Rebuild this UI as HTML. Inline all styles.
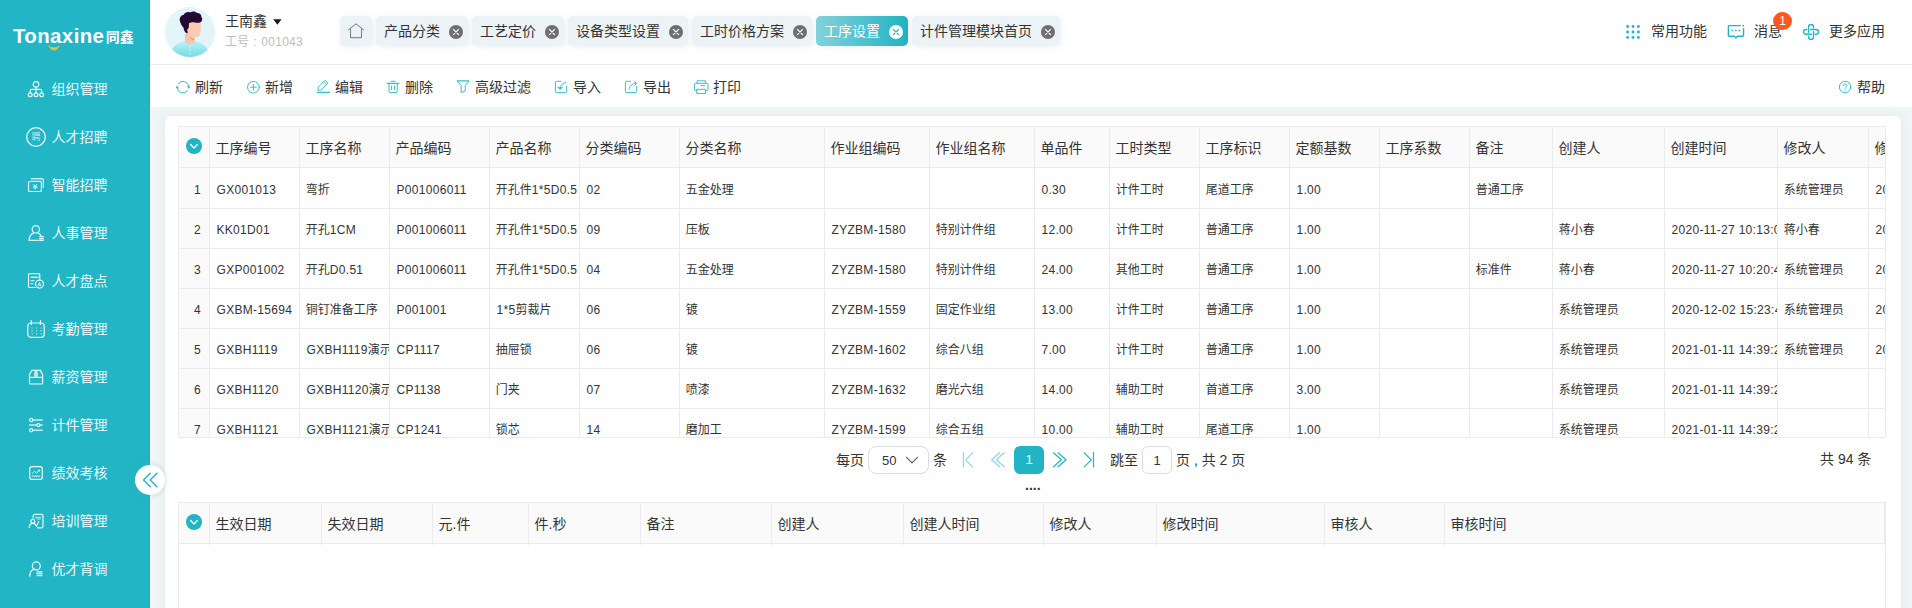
<!DOCTYPE html>
<html lang="zh-CN">
<head>
<meta charset="utf-8">
<title>工序设置</title>
<style>
*{box-sizing:border-box;margin:0;padding:0}
html,body{width:1912px;height:608px;overflow:hidden;background:#eef6f8;font-family:"Liberation Sans","Noto Sans CJK SC",sans-serif;color:#333;font-size:14px}
.abs{position:absolute}
#side{position:absolute;left:0;top:0;width:150px;height:608px;background:#21b5c5;border-right:1px solid #16b2c2;box-shadow:1px 0 0 #fbfdfd}
#logo{position:absolute;left:13px;top:23px;height:26px;line-height:26px;color:#fff;white-space:nowrap}
#logo .en{font-size:20.4px;font-weight:bold;letter-spacing:0.42px}
#logo .cn{font-size:14px;font-weight:bold;letter-spacing:-0.2px;margin-left:1.5px;position:relative;top:-1px}
#smile{position:absolute;left:48px;top:44.5px}
.mi{position:absolute;left:0;width:150px;height:48px;color:#fff;font-size:14px;line-height:20px}
.mi svg{position:absolute;left:27px;top:15px;width:18px;height:18px;fill:none;stroke:#fff;stroke-width:1.2;stroke-linecap:round;stroke-linejoin:round;opacity:.92}
.mi span{position:absolute;left:51.5px;top:14px;white-space:nowrap;font-weight:350}
#head{position:absolute;left:150px;top:0;width:1762px;height:65px;background:#fff;border-bottom:1px solid #e6e9eb}
#tool{position:absolute;left:150px;top:65px;width:1762px;height:42px;background:#fff}
#avatar{position:absolute;left:15px;top:7px;width:50px;height:50px;border-radius:50%;overflow:hidden;background:#e2f5f8}
#uname{position:absolute;left:75px;top:11px;font-size:14px;line-height:20px;color:#333;white-space:nowrap}
#uno{position:absolute;left:75px;top:34px;font-size:12px;line-height:16px;color:#bdbdbd;white-space:nowrap}
.tab{position:absolute;top:16px;height:30px;border-radius:5px;background:#ebf3f6;font-size:14px;line-height:30px;padding-left:8px;white-space:nowrap;color:#333;box-shadow:1px 1px 6px rgba(170,180,185,.2)}
.tab .x{position:absolute;right:5px;top:9px;width:14px;height:14px}
.tab.on{background:linear-gradient(90deg,#82d2da 0%,#20b3c3 100%);color:#fff}
.hr{position:absolute;top:21px;font-size:14px;line-height:20px;white-space:nowrap;color:#333}
.tb{position:absolute;top:12px;font-size:14px;line-height:20px;white-space:nowrap;color:#333}
.tb svg{position:absolute;left:-19px;top:3px;width:14px;height:14px;fill:none;stroke:#3bbccb;stroke-width:1;stroke-linecap:round;stroke-linejoin:round}
#card{position:absolute;left:165px;top:116px;width:1736px;height:520px;background:#fff;border-radius:6px 6px 0 0;box-shadow:0 0 10px rgba(238,224,218,.7)}
.tbl{position:absolute;left:178px;width:1708px;overflow:hidden;border:1px solid #ebebeb;background:#fff}
#t1{top:126px;height:312px}
#t2{top:502px;height:120px}
#t2 .td{position:relative;overflow:visible}
#t2 .td::after{content:'';position:absolute;right:-1px;top:41px;width:1px;height:1px;background:#ebebeb}
.tr{display:flex;width:1900px;height:40px}
.tr.th{height:41px}
.tr.r1{height:41px}
.tr.r1 .td{height:41px;padding-top:1px}
.td{flex:none;height:40px;border-right:1px solid #ebebeb;border-bottom:1px solid #ebebeb;padding:0 0 0 6.5px;font-size:12px;line-height:43px;white-space:nowrap;overflow:hidden;color:#333}
.th .td{height:41px;font-size:14px;line-height:42px;background:#fafafa;color:#333;padding-left:5.5px}
.td.k{padding-left:5.8px}
.td i{font-style:normal;letter-spacing:.3px}
.td.c0{background:#fafafa;padding:0;text-align:center;text-indent:7px}
.th .td.c0{text-indent:0}
.chk{display:block;position:relative;left:7px;top:11px;width:16px;height:16px}
.chk svg{display:block}
#pager{position:absolute;left:0;top:446px;height:28px;font-size:14px;line-height:28px;color:#333;white-space:nowrap}
#pager > *{position:absolute;top:0}
.box{border:1px solid #dcdcdc;border-radius:5px;background:#fff;height:28px}
</style>
</head>
<body>
<div id="side">
  <div id="logo"><span class="en">Tonaxine</span><span class="cn">同鑫</span></div>
  <svg id="smile" width="12" height="6" viewBox="0 0 12 6"><path d="M0.5 0.9 Q6 4.6 11.500 0.9 Q6 9.6 0.5 0.9z" fill="#f2c12c" stroke="#f2c12c" stroke-width=".5" stroke-linejoin="round"/></svg>

  <div class="mi" style="top:65px"><svg viewBox="0 0 18 18"><circle cx="9" cy="4.400" r="2.800"/><path d="M9 7.200v5.500M3.200 12.700v-1.900a1.500 1.500 0 0 1 1.500-1.500h8.500a1.500 1.500 0 0 1 1.500 1.500v1.900"/><circle cx="3.200" cy="14.700" r="1.900"/><circle cx="9" cy="14.700" r="1.900"/><circle cx="14.700" cy="14.700" r="1.900"/></svg><span>组织管理</span></div>
  <div class="mi" style="top:113px"><svg viewBox="0 0 20 20" style="left:26px;top:14px;width:20px;height:20px"><circle cx="10" cy="10" r="9.300" stroke-width="1.300"/><text x="10" y="13.300" font-size="9" text-anchor="middle" fill="#fff" stroke="none" opacity=".8" font-family="'Liberation Sans','Noto Sans CJK SC',sans-serif">聘</text></svg><span>人才招聘</span></div>
  <div class="mi" style="top:161px"><svg viewBox="0 0 18 18"><rect x="1.500" y="5.500" width="12.900" height="10" rx="1.300"/><path d="M4.200 2.600H15.200a1.100 1.100 0 0 1 1.100 1.100V11.500" opacity=".85"/><path d="M4.200 4H15" opacity=".45"/><path d="M6.600 8.300l1.600 1.800 1.600-1.800M6.400 10.300h3.600M6.400 11.800h3.600M8.200 10.100v3.200" stroke-width=".9" opacity=".9"/></svg><span>智能招聘</span></div>
  <div class="mi" style="top:209px"><svg viewBox="0 0 18 18"><circle cx="8.800" cy="5.300" r="3.700"/><path d="M2.200 16.400c0-3.900 1.900-6.500 4.400-7.300M11.100 9.100c1.200.5 2.100 1.200 2.800 2.200M2.200 16.400H11"/><path d="M12.100 12.700h4.700M12.100 14.600h4.700M12.100 16.400h4.700" stroke-width="1.300" stroke-linecap="butt"/></svg><span>人事管理</span></div>
  <div class="mi" style="top:257px"><svg viewBox="0 0 18 18"><path d="M12.800 7.200V2.900a1.300 1.300 0 0 0-1.300-1.300H2.800a1.300 1.300 0 0 0-1.300 1.300v11.300a1.300 1.300 0 0 0 1.300 1.300h5.400"/><path d="M4 5.200h7" stroke-width="1.500" opacity=".85"/><path d="M4 8.600h3M4 11.700h2" opacity=".85"/><circle cx="12.500" cy="12.100" r="4"/><path d="M11.200 13.900l1.300-3.400 1.300 3.400M11.700 12.900h1.600" stroke-width=".9" opacity=".9"/></svg><span>人才盘点</span></div>
  <div class="mi" style="top:305px"><svg viewBox="0 0 18 18" style="overflow:visible"><rect x=".8" y="3" width="16.400" height="14.300" rx="3"/><path d="M4.300 .6v3.800M13.400 .6v3.800"/><path d="M4.500 8h1.200M9 8h1.200M13.400 8h1.200M4.500 10.900h1.200M9 10.900h1.200M13.400 10.900h1.200M4.500 13.800h1.200M9 13.800h1.200M13.400 13.800h1.200" stroke-width="1.200" opacity=".7" stroke-linecap="butt"/></svg><span>考勤管理</span></div>
  <div class="mi" style="top:353px"><svg viewBox="0 0 18 18"><path d="M4.900 2.400H13.300L15.600 6.600V15a1 1 0 0 1-1 1H3.500a1 1 0 0 1-1-1V6.600z"/><path d="M2.500 9.300H15.600"/><rect x="7.600" y="3.600" width="2.900" height="5.200" rx=".8" fill="#fff" fill-opacity=".75" stroke-width=".6"/></svg><span>薪资管理</span></div>
  <div class="mi" style="top:401px"><svg viewBox="0 0 18 18"><path d="M5.800 3.950H15.700M2 9.100H9.800M13 9.100H15.700M5.800 14.150H15.700" stroke-width="1.500" opacity=".8" stroke-linecap="butt"/><circle cx="4.200" cy="3.950" r="1.600"/><circle cx="11.400" cy="9.100" r="1.600"/><circle cx="4.200" cy="14.150" r="1.600"/></svg><span>计件管理</span></div>
  <div class="mi" style="top:449px"><svg viewBox="0 0 18 18"><rect x="2.800" y="2.700" width="12.500" height="12.700" rx="2.200"/><path d="M5.300 9.700L7.400 7.300 9.500 8.900 12 6.800" stroke-width="1"/><circle cx="12.300" cy="6.500" r=".9" fill="#fff" stroke="none"/><path d="M5.300 12.100H12.800" opacity=".8"/></svg><span>绩效考核</span></div>
  <div class="mi" style="top:497px"><svg viewBox="0 0 18 18"><path d="M6.200 6V3.900a1.500 1.500 0 0 1 1.500-1.500H14.500a1.500 1.500 0 0 1 1.500 1.500V14.300a1.500 1.500 0 0 1-1.500 1.500H10.400"/><circle cx="5.800" cy="9.300" r="1.900"/><path d="M2.200 15.600c.1-2.600 1.600-4.300 3.600-4.300s3.300 1.300 3.800 3.200"/><path d="M11.800 9.300L9.700 14.200" stroke-width="1"/><path d="M8.500 5.400H13.900M9.800 7H13.400" stroke-width=".9" opacity=".85"/></svg><span>培训管理</span></div>
  <div class="mi" style="top:545px"><svg viewBox="0 0 18 18"><circle cx="9.300" cy="5.900" r="4"/><path d="M2.800 16.200c0-3.600 1.700-6.100 4.300-6.900"/><path d="M9.500 11.800h6M9.500 13.700h6M9.500 15.600h6" stroke-width="1.300" stroke-linecap="butt"/></svg><span>优才背调</span></div>
</div>

<div id="head">
  <div id="avatar">
    <svg width="50" height="50" viewBox="0 0 50 50">
      <defs><linearGradient id="sh" x1="0" y1="0" x2="0" y2="1"><stop offset="0" stop-color="#b9f3f7"/><stop offset="1" stop-color="#79d9e3"/></linearGradient></defs>
      <circle cx="25" cy="25" r="25" fill="#e3f5f9"/>
      <path d="M4.500 50c.6-9 6.500-13.400 15.500-16l5 2.600 5.500-2.600c8 2.200 13.500 7 14.500 16z" fill="url(#sh)"/>
      <path d="M20 27h9.500v8.200c-1.500 2.600-7.500 2.800-9.500-.2z" fill="#f7c4aa"/>
      <path d="M24.500 29.500c1.800 1.400 3.500 2.400 5.200 2.900l-.5 1c-2-.6-3.700-1.900-4.700-3.900z" fill="#ee8f6f"/>
      <path d="M21 13.500h14.500c.6 4 .4 9.500-.3 13.500-.5 2.400-2.300 3.400-4.700 3.300-3.500-.2-7.500-2-9-5.300z" fill="#f9cbb3"/>
      <path d="M15 14.500c-1-3.500.8-6.300 3.800-6.800 1-2.300 4-3.300 6.300-2.300 2.300-1.500 5.500-1.200 7 .6 2.400-.2 4.500 1.600 4.300 4.100 1.500 1.600 1 4.300-1 5.200-1.700.9-3.600.5-5.400.2-2-.3-4-.4-5.800.4-.8 2 .2 3.600-.7 5.400-1 .3-1.700 1.600-1 2.900.4 1 .2 1.800-.4 2.400-2.300-1-3.400-3.500-3.700-6-1.500-1.500-2.600-3.600-3.400-6.100z" fill="#210b30"/>
      <path d="M25 39.400v.1M25 43v.1M25 46.600v.1" stroke="#fff" stroke-width="1.300" stroke-linecap="round" opacity=".75"/>
    </svg>
  </div>
  <div id="uname">王南鑫<svg width="9" height="6" viewBox="0 0 9 6" style="margin-left:6px;position:relative;top:-1px"><path d="M0.200 0.200h8.400L4.400 5.800z" fill="#1a1a1a"/></svg></div>
  <div id="uno">工号<span style="margin:0 4.5px 0 4.500px">:</span><span style="letter-spacing:.25px">001043</span></div>

  <div class="tab" style="left:190px;width:32px;padding:0"><svg width="32" height="30" viewBox="0 0 32 30" fill="none" stroke="#6a6a6a" stroke-width=".9" stroke-linejoin="round" stroke-linecap="round"><path d="M8.200 14L16 7.800l7.800 6.200"/><path d="M10.500 13v8.700h11V13"/></svg></div>
  <div class="tab" style="left:226px;width:92px">产品分类<svg class="x" viewBox="0 0 14 14"><circle cx="7" cy="7" r="7" fill="#6e6e6e"/><path d="M4.400 4.400l5.200 5.200M9.600 4.400l-5.200 5.200" stroke="#fff" stroke-width="1.300" stroke-linecap="round"/></svg></div>
  <div class="tab" style="left:322px;width:92px">工艺定价<svg class="x" viewBox="0 0 14 14"><circle cx="7" cy="7" r="7" fill="#6e6e6e"/><path d="M4.400 4.400l5.200 5.200M9.600 4.400l-5.200 5.200" stroke="#fff" stroke-width="1.300" stroke-linecap="round"/></svg></div>
  <div class="tab" style="left:418px;width:120px">设备类型设置<svg class="x" viewBox="0 0 14 14"><circle cx="7" cy="7" r="7" fill="#6e6e6e"/><path d="M4.400 4.400l5.200 5.200M9.600 4.400l-5.200 5.200" stroke="#fff" stroke-width="1.300" stroke-linecap="round"/></svg></div>
  <div class="tab" style="left:542px;width:120px">工时价格方案<svg class="x" viewBox="0 0 14 14"><circle cx="7" cy="7" r="7" fill="#6e6e6e"/><path d="M4.400 4.400l5.200 5.200M9.600 4.400l-5.200 5.200" stroke="#fff" stroke-width="1.300" stroke-linecap="round"/></svg></div>
  <div class="tab on" style="left:666px;width:92px">工序设置<svg class="x" viewBox="0 0 14 14"><circle cx="7" cy="7" r="7" fill="#fff"/><path d="M4.400 4.400l5.200 5.200M9.600 4.400l-5.200 5.200" stroke="#21b4c5" stroke-width="1.300" stroke-linecap="round"/></svg></div>
  <div class="tab" style="left:762px;width:148px">计件管理模块首页<svg class="x" viewBox="0 0 14 14"><circle cx="7" cy="7" r="7" fill="#6e6e6e"/><path d="M4.400 4.400l5.200 5.200M9.600 4.400l-5.200 5.200" stroke="#fff" stroke-width="1.300" stroke-linecap="round"/></svg></div>

  <svg class="abs" style="left:1476px;top:25px" width="14" height="14" viewBox="0 0 14 14" fill="#22b5c6"><circle cx="1.600" cy="1.500" r="1.450"/><circle cx="7" cy="1.500" r="1.450"/><circle cx="12.400" cy="1.500" r="1.450"/><circle cx="1.600" cy="7" r="1.450"/><circle cx="7" cy="7" r="1.450"/><circle cx="12.400" cy="7" r="1.450"/><circle cx="1.600" cy="12.400" r="1.450"/><circle cx="7" cy="12.400" r="1.450"/><circle cx="12.400" cy="12.400" r="1.450"/></svg>
  <div class="hr" style="left:1501px">常用功能</div>
  <svg class="abs" style="left:1577px;top:24px" width="18" height="17" viewBox="0 0 18 17" fill="none" stroke="#22b5c6" stroke-width="1.400" stroke-linejoin="round" stroke-linecap="round"><path d="M13.400 1.600H2.100a.7.700 0 0 0-.7.700v9.300a.7.700 0 0 0 .7.700h5.200l1.600 1.700 1.600-1.700h5.300a.7.700 0 0 0 .7-.7V4.800"/><path d="M16.300 1.500v.2" stroke-width="1.700"/><path d="M4.700 6.500h1.500M8.100 6.500h1.500M11.500 6.500h1.500" stroke-width="1.400" stroke-linecap="butt"/></svg>
  <div class="hr" style="left:1604px">消息</div>
  <div class="abs" style="left:1623px;top:12px;width:19px;height:18px;border-radius:9.500px/9px;background:#ff5722;color:#fff;font-size:12px;line-height:19px;text-align:center">1</div>
  <svg class="abs" style="left:1652px;top:23px" width="18" height="18" viewBox="0 0 18 18" fill="none" stroke="#22b5c6" stroke-width="1.400" stroke-linejoin="round" stroke-linecap="round"><path d="M6.600 9.200V3.900A2.450 2.450 0 0 1 11.500 3.900V4.700"/><path d="M8.600 6.500H14.100A2.400 2.400 0 0 1 14.100 11.300H13.300"/><path d="M11.500 8.600V13.900A2.450 2.450 0 0 1 6.600 13.900V13.100"/><path d="M9.400 11.300H3.900A2.400 2.400 0 0 1 3.900 6.500H4.700"/></svg>
  <div class="hr" style="left:1679px">更多应用</div>
</div>

<div id="tool">
  <div class="tb" style="left:45px"><svg viewBox="0 0 14 14"><path d="M2.300 3.700A5.900 5.900 0 0 1 12.900 7"/><path d="M11.700 10.700A5.900 5.900 0 0 1 1.100 7.400"/><path d="M11.500 6.300h2.800l-1.400 2.100z" fill="#3bbccb" stroke-width=".4"/><path d="M-.3 8h2.800L1.100 5.900z" fill="#3bbccb" stroke-width=".4"/></svg>刷新</div>
  <div class="tb" style="left:115px"><svg viewBox="0 0 14 14"><circle cx="7.400" cy="7.200" r="5.850"/><path d="M7.400 4.300v5.800M4.500 7.200h5.800"/></svg>新增</div>
  <div class="tb" style="left:185px"><svg viewBox="0 0 14 14"><path d="M9.200 .6L11.900 3 4.800 10.100 1.900 10.400 2.200 7.500z"/><path d="M7.800 2.100l2.600 2.400"/><path d="M1 12.400h12.900" stroke-width="1.100"/></svg>编辑</div>
  <div class="tb" style="left:255px"><svg viewBox="0 0 14 14"><path d="M1.200 3.400h11.700M5.400 1.300h3.500" stroke-width="1.100"/><path d="M3 3.600v7.800a1.200 1.200 0 0 0 1.200 1.200h5.800a1.200 1.200 0 0 0 1.200-1.200V3.600"/><path d="M5.600 5.900v3.800M8.500 5.900v3.800"/></svg>删除</div>
  <div class="tb" style="left:325px"><svg viewBox="0 0 14 14"><path d="M1.400 .9h11.400" stroke-width="1.400"/><path d="M1.500 1.200L5.200 5.700V12.500L9.200 11V5.700L12.700 1.200"/></svg>高级过滤</div>
  <div class="tb" style="left:423px"><svg viewBox="0 0 14 14"><path d="M12.700 6.200v5.400a1 1 0 0 1-1 1H2.400a1 1 0 0 1-1-1V2.300a1 1 0 0 1 1-1H6.800"/><path d="M11.800 2.400C8.600 3 6.500 5.200 6.100 8.800"/><path d="M3.800 7.300L6 9.600 8.400 7.600z" fill="#3bbccb" stroke-width=".6"/></svg>导入</div>
  <div class="tb" style="left:493px"><svg viewBox="0 0 14 14"><path d="M12.700 6.400v5.200a1 1 0 0 1-1 1H2.400a1 1 0 0 1-1-1V2.300a1 1 0 0 1 1-1H6.600"/><path d="M5.200 9.300C5.400 6 7.600 3.800 11.600 3.400"/><path d="M9.900 1.300l2.700 2.100-1.800 2"/></svg>导出</div>
  <div class="tb" style="left:563px"><svg viewBox="0 0 16 14" style="left:-20px;width:16px;height:14px"><path d="M4.100 3.200V.8h8.300v2.400"/><path d="M4 10.600H2.600a1.100 1.100 0 0 1-1.100-1.100V4.400a1.100 1.100 0 0 1 1.100-1.100h11.300a1.100 1.100 0 0 1 1.100 1.100v5.100a1.100 1.100 0 0 1-1.100 1.100h-1.400"/><path d="M4.100 9.300h8.300v4.300H4.100z"/><path d="M8 5.600h3.600"/></svg>打印</div>
  <div class="tb" style="left:1707px"><svg viewBox="0 0 14 14"><circle cx="7.100" cy="7" r="5.700"/><path d="M5.300 5.700a1.800 1.800 0 1 1 2.700 1.500c-.6.400-.9.700-.9 1.500" stroke-width=".9"/><path d="M7.100 10.100v.3" stroke-width="1"/></svg>帮助</div>
</div>

<div id="card"></div>
<div class="tbl" id="t1">
<div class="tr th">
<div class="td c0" style="width:31px"><span class="chk"><svg viewBox="0 0 16 16" width="16" height="16"><circle cx="8" cy="8" r="8" fill="#21b4c5"/><path d="M4.6 6.6 L8 10 L11.4 6.6" fill="none" stroke="#fff" stroke-width="1.4" stroke-linecap="round" stroke-linejoin="round"/></svg></span></div>
<div class="td" style="width:90px">工序编号</div>
<div class="td" style="width:90px">工序名称</div>
<div class="td" style="width:100px">产品编码</div>
<div class="td" style="width:90px">产品名称</div>
<div class="td" style="width:100px">分类编码</div>
<div class="td" style="width:145px">分类名称</div>
<div class="td" style="width:105px">作业组编码</div>
<div class="td" style="width:105px">作业组名称</div>
<div class="td" style="width:75px">单品件</div>
<div class="td" style="width:90px">工时类型</div>
<div class="td" style="width:90px">工序标识</div>
<div class="td" style="width:90px">定额基数</div>
<div class="td" style="width:90px">工序系数</div>
<div class="td" style="width:83px">备注</div>
<div class="td" style="width:112px">创建人</div>
<div class="td" style="width:113px">创建时间</div>
<div class="td" style="width:91px">修改人</div>
<div class="td" style="width:113px">修改时间</div>
</div>
<div class="tr r1">
<div class="td c0" style="width:31px"><i>1</i></div>
<div class="td" style="width:90px"><i>GX001013</i></div>
<div class="td k" style="width:90px">弯折</div>
<div class="td" style="width:100px"><i>P001006011</i></div>
<div class="td k" style="width:90px">开孔件<i>1*5D0.5</i></div>
<div class="td" style="width:100px"><i>02</i></div>
<div class="td k" style="width:145px">五金处理</div>
<div class="td" style="width:105px"></div>
<div class="td" style="width:105px"></div>
<div class="td" style="width:75px"><i>0.30</i></div>
<div class="td k" style="width:90px">计件工时</div>
<div class="td k" style="width:90px">尾道工序</div>
<div class="td" style="width:90px"><i>1.00</i></div>
<div class="td" style="width:90px"></div>
<div class="td k" style="width:83px">普通工序</div>
<div class="td" style="width:112px"></div>
<div class="td" style="width:113px"></div>
<div class="td k" style="width:91px">系统管理员</div>
<div class="td" style="width:113px"><i>2021-01-11 14:39:22</i></div>
</div>
<div class="tr">
<div class="td c0" style="width:31px"><i>2</i></div>
<div class="td" style="width:90px"><i>KK01D01</i></div>
<div class="td k" style="width:90px">开孔<i>1CM</i></div>
<div class="td" style="width:100px"><i>P001006011</i></div>
<div class="td k" style="width:90px">开孔件<i>1*5D0.5</i></div>
<div class="td" style="width:100px"><i>09</i></div>
<div class="td k" style="width:145px">压板</div>
<div class="td" style="width:105px"><i>ZYZBM-1580</i></div>
<div class="td k" style="width:105px">特别计件组</div>
<div class="td" style="width:75px"><i>12.00</i></div>
<div class="td k" style="width:90px">计件工时</div>
<div class="td k" style="width:90px">普通工序</div>
<div class="td" style="width:90px"><i>1.00</i></div>
<div class="td" style="width:90px"></div>
<div class="td" style="width:83px"></div>
<div class="td k" style="width:112px">蒋小春</div>
<div class="td" style="width:113px"><i>2020-11-27 10:13:03</i></div>
<div class="td k" style="width:91px">蒋小春</div>
<div class="td" style="width:113px"><i>2020-11-27 10:13:03</i></div>
</div>
<div class="tr">
<div class="td c0" style="width:31px"><i>3</i></div>
<div class="td" style="width:90px"><i>GXP001002</i></div>
<div class="td k" style="width:90px">开孔<i>D0.51</i></div>
<div class="td" style="width:100px"><i>P001006011</i></div>
<div class="td k" style="width:90px">开孔件<i>1*5D0.5</i></div>
<div class="td" style="width:100px"><i>04</i></div>
<div class="td k" style="width:145px">五金处理</div>
<div class="td" style="width:105px"><i>ZYZBM-1580</i></div>
<div class="td k" style="width:105px">特别计件组</div>
<div class="td" style="width:75px"><i>24.00</i></div>
<div class="td k" style="width:90px">其他工时</div>
<div class="td k" style="width:90px">普通工序</div>
<div class="td" style="width:90px"><i>1.00</i></div>
<div class="td" style="width:90px"></div>
<div class="td k" style="width:83px">标准件</div>
<div class="td k" style="width:112px">蒋小春</div>
<div class="td" style="width:113px"><i>2020-11-27 10:20:41</i></div>
<div class="td k" style="width:91px">系统管理员</div>
<div class="td" style="width:113px"><i>2021-01-11 14:39:22</i></div>
</div>
<div class="tr">
<div class="td c0" style="width:31px"><i>4</i></div>
<div class="td" style="width:90px"><i>GXBM-15694</i></div>
<div class="td k" style="width:90px">铜钉准备工序</div>
<div class="td" style="width:100px"><i>P001001</i></div>
<div class="td" style="width:90px"><i>1*5</i>剪裁片</div>
<div class="td" style="width:100px"><i>06</i></div>
<div class="td k" style="width:145px">镀</div>
<div class="td" style="width:105px"><i>ZYZBM-1559</i></div>
<div class="td k" style="width:105px">固定作业组</div>
<div class="td" style="width:75px"><i>13.00</i></div>
<div class="td k" style="width:90px">计件工时</div>
<div class="td k" style="width:90px">普通工序</div>
<div class="td" style="width:90px"><i>1.00</i></div>
<div class="td" style="width:90px"></div>
<div class="td" style="width:83px"></div>
<div class="td k" style="width:112px">系统管理员</div>
<div class="td" style="width:113px"><i>2020-12-02 15:23:41</i></div>
<div class="td k" style="width:91px">系统管理员</div>
<div class="td" style="width:113px"><i>2021-01-11 14:39:22</i></div>
</div>
<div class="tr">
<div class="td c0" style="width:31px"><i>5</i></div>
<div class="td" style="width:90px"><i>GXBH1119</i></div>
<div class="td" style="width:90px"><i>GXBH1119</i>演示</div>
<div class="td" style="width:100px"><i>CP1117</i></div>
<div class="td k" style="width:90px">抽屉锁</div>
<div class="td" style="width:100px"><i>06</i></div>
<div class="td k" style="width:145px">镀</div>
<div class="td" style="width:105px"><i>ZYZBM-1602</i></div>
<div class="td k" style="width:105px">综合八组</div>
<div class="td" style="width:75px"><i>7.00</i></div>
<div class="td k" style="width:90px">计件工时</div>
<div class="td k" style="width:90px">普通工序</div>
<div class="td" style="width:90px"><i>1.00</i></div>
<div class="td" style="width:90px"></div>
<div class="td" style="width:83px"></div>
<div class="td k" style="width:112px">系统管理员</div>
<div class="td" style="width:113px"><i>2021-01-11 14:39:22</i></div>
<div class="td k" style="width:91px">系统管理员</div>
<div class="td" style="width:113px"><i>2021-01-11 14:39:22</i></div>
</div>
<div class="tr">
<div class="td c0" style="width:31px"><i>6</i></div>
<div class="td" style="width:90px"><i>GXBH1120</i></div>
<div class="td" style="width:90px"><i>GXBH1120</i>演示</div>
<div class="td" style="width:100px"><i>CP1138</i></div>
<div class="td k" style="width:90px">门夹</div>
<div class="td" style="width:100px"><i>07</i></div>
<div class="td k" style="width:145px">喷漆</div>
<div class="td" style="width:105px"><i>ZYZBM-1632</i></div>
<div class="td k" style="width:105px">磨光六组</div>
<div class="td" style="width:75px"><i>14.00</i></div>
<div class="td k" style="width:90px">辅助工时</div>
<div class="td k" style="width:90px">首道工序</div>
<div class="td" style="width:90px"><i>3.00</i></div>
<div class="td" style="width:90px"></div>
<div class="td" style="width:83px"></div>
<div class="td k" style="width:112px">系统管理员</div>
<div class="td" style="width:113px"><i>2021-01-11 14:39:22</i></div>
<div class="td" style="width:91px"></div>
<div class="td" style="width:113px"></div>
</div>
<div class="tr">
<div class="td c0" style="width:31px"><i>7</i></div>
<div class="td" style="width:90px"><i>GXBH1121</i></div>
<div class="td" style="width:90px"><i>GXBH1121</i>演示</div>
<div class="td" style="width:100px"><i>CP1241</i></div>
<div class="td k" style="width:90px">锁芯</div>
<div class="td" style="width:100px"><i>14</i></div>
<div class="td k" style="width:145px">磨加工</div>
<div class="td" style="width:105px"><i>ZYZBM-1599</i></div>
<div class="td k" style="width:105px">综合五组</div>
<div class="td" style="width:75px"><i>10.00</i></div>
<div class="td k" style="width:90px">辅助工时</div>
<div class="td k" style="width:90px">尾道工序</div>
<div class="td" style="width:90px"><i>1.00</i></div>
<div class="td" style="width:90px"></div>
<div class="td" style="width:83px"></div>
<div class="td k" style="width:112px">系统管理员</div>
<div class="td" style="width:113px"><i>2021-01-11 14:39:22</i></div>
<div class="td" style="width:91px"></div>
<div class="td" style="width:113px"></div>
</div>
</div>

<div id="pager">
  <span style="left:836px">每页</span>
  <span class="box" style="left:868px;width:61px;border-radius:8px"></span>
  <span style="left:882px;font-size:13px;top:1px">50</span>
  <svg style="left:905px;top:10px" width="14" height="8" viewBox="0 0 14 8" fill="none" stroke="#555" stroke-width="1.100" stroke-linecap="round" stroke-linejoin="round"><path d="M1.500 1.300l5.500 5.500 5.500-5.500"/></svg>
  <span style="left:933px">条</span>
  <svg style="left:961px;top:6px" width="14" height="16" viewBox="0 0 14 16" fill="none" stroke="#8fd8e0" stroke-width="1.200" stroke-linecap="round" stroke-linejoin="round"><path d="M2.400 .6v14.400M11.500 .8L4.600 7.800l6.900 7"/></svg>
  <svg style="left:990px;top:6px" width="16" height="16" viewBox="0 0 16 16" fill="none" stroke="#8fd8e0" stroke-width="1.200" stroke-linecap="round" stroke-linejoin="round"><path d="M9.600 .8L1.700 7.800l7.900 7M14.200 .8L6.300 7.800l7.900 7"/></svg>
  <span style="left:1014px;width:30px;height:28px;border-radius:6px;background:#21b4c5;color:#fff;text-align:center;font-size:13px">1</span>
  <svg style="left:1052px;top:6px" width="16" height="16" viewBox="0 0 16 16" fill="none" stroke="#21b4c5" stroke-width="1.200" stroke-linecap="round" stroke-linejoin="round"><path d="M1.500 .8L9.400 7.800l-7.900 7M6.100 .8L14 7.800l-7.900 7"/></svg>
  <svg style="left:1082px;top:6px" width="14" height="16" viewBox="0 0 14 16" fill="none" stroke="#21b4c5" stroke-width="1.200" stroke-linecap="round" stroke-linejoin="round"><path d="M11.500 .6v14.400M2.300 .8L9.200 7.800l-6.900 7"/></svg>
  <span style="left:1110px">跳至</span>
  <span class="box" style="left:1142px;width:30px;border-radius:6px;text-align:center;font-size:13px;line-height:28px">1</span>
  <span style="left:1176px">页 , 共 2 页</span>
  <span style="left:1820px;top:-1px">共 94 条</span>
</div>
<div class="abs" style="left:1025px;top:477px;font-size:14px;line-height:16px;font-weight:bold;letter-spacing:0px;color:#333">....</div>

<div class="tbl" id="t2">
<div class="tr th">
<div class="td c0" style="width:31px"><span class="chk"><svg viewBox="0 0 16 16" width="16" height="16"><circle cx="8" cy="8" r="8" fill="#21b4c5"/><path d="M4.6 6.6 L8 10 L11.4 6.6" fill="none" stroke="#fff" stroke-width="1.4" stroke-linecap="round" stroke-linejoin="round"/></svg></span></div>
<div class="td" style="width:112px">生效日期</div>
<div class="td" style="width:111px">失效日期</div>
<div class="td" style="width:96px">元.件</div>
<div class="td" style="width:112px">件.秒</div>
<div class="td" style="width:131px">备注</div>
<div class="td" style="width:132px">创建人</div>
<div class="td" style="width:140px">创建人时间</div>
<div class="td" style="width:113px">修改人</div>
<div class="td" style="width:168px">修改时间</div>
<div class="td" style="width:120px">审核人</div>
<div class="td" style="width:440px">审核时间</div>
</div></div>

<div class="abs" style="left:135px;top:465px;width:30px;height:30px;border-radius:50%;background:#fff;box-shadow:0 0 6px rgba(120,160,170,.35)">
  <svg width="30" height="30" viewBox="0 0 30 30" fill="none" stroke="#21b4c5" stroke-width="1.400" stroke-linecap="round" stroke-linejoin="round"><path d="M15.300 8.300L8.500 15l6.800 6.700M21.900 8.300L15.100 15l6.800 6.700"/></svg>
</div>
</body>
</html>
